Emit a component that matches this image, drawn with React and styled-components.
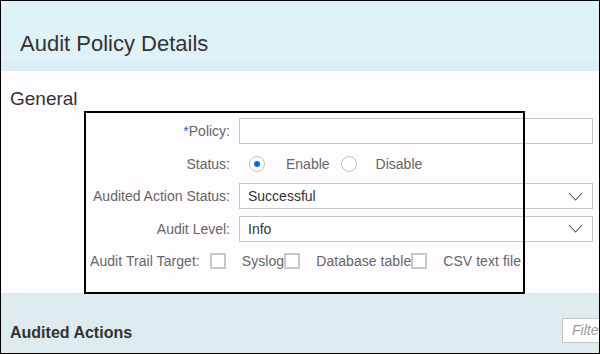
import React from 'react'
import styled, { createGlobalStyle } from 'styled-components'

const Global = createGlobalStyle`
    body {
        margin: 0;
        font-family: "Liberation Sans", Arial, sans-serif;
    }
`

const Frame = styled.div`
    width: 600px;
    height: 354px;
    box-sizing: border-box;
    border: 1px solid #000;
    display: flex;
    flex-direction: column;
    overflow: hidden;
`

const Header = styled.div`
    height: 70px;
    flex-shrink: 0;
    box-sizing: border-box;
    background: linear-gradient(#dff2f7 0, #dff2f7 61px, #dcedf5 61px);
    display: flex;
    align-items: center;
    padding: 16px 19px 0;
`

const HeaderTitle = styled.h1`
    margin: 0;
    font-size: 22px;
    font-weight: normal;
    color: #333;
`

const General = styled.div`
    position: relative;
    height: 222px;
    flex-shrink: 0;
    background: #fefcfe;
    padding: 17px 0 0 9px;
    box-sizing: border-box;
`

const SectionTitle = styled.h2`
    margin: 0;
    font-size: 19px;
    line-height: 21px;
    font-weight: normal;
    color: #333;
`

const Form = styled.div`
    margin: 9px 0 0 80px;
    display: grid;
    grid-template-columns: 140px 354px;
    column-gap: 9px;
    row-gap: 6.5px;
    grid-auto-rows: 26px;
`

const Label = styled.div`
    display: flex;
    align-items: center;
    justify-content: flex-end;
    font-size: 14px;
    color: #666;
`

const Req = styled.span`
    color: #0a6ed1;
`

const Input = styled.div`
    box-sizing: border-box;
    border: 1px solid #c6c6c6;
    background: #fff;
    display: flex;
    align-items: center;
    justify-content: space-between;
    padding: 0 9px 0 8px;
    font-size: 14px;
    color: #333;
`

const Radios = styled.div`
    display: flex;
    align-items: center;
    padding-left: 10px;
    font-size: 14px;
    color: #666;
`

const Radio = styled.span`
    width: 16px;
    height: 16px;
    box-sizing: border-box;
    border-radius: 50%;
    border: 1px solid #c2c2c2;
    background: #fff;
    display: flex;
    align-items: center;
    justify-content: center;
    margin-right: ${p => p.$after}px;

    &::after {
        content: '';
        width: 6px;
        height: 6px;
        border-radius: 50%;
        background: ${p => (p.$checked ? '#0a6ed1' : 'transparent')};
    }
`

const RadioText = styled.span`
    margin-right: ${p => p.$after || 0}px;
`

const TrailRow = styled.div`
    grid-column: 1 / -1;
    display: flex;
    align-items: center;
    font-size: 14px;
    letter-spacing: 0.06px;
    color: #666;
`

const TrailLabel = styled.span`
    margin-right: 10px;
`

const Check = styled.span`
    width: 16px;
    height: 16px;
    box-sizing: border-box;
    border: 2px solid #c8c8c8;
    background: #fff;
    margin-right: 16px;
    flex-shrink: 0;
`

const Annotation = styled.div`
    position: absolute;
    left: 83px;
    top: 40px;
    width: 441px;
    height: 183px;
    box-sizing: border-box;
    border: 2px solid #000;
    pointer-events: none;
`

const Actions = styled.div`
    flex: 1;
    background: #deebef;
    display: flex;
    align-items: center;
    justify-content: space-between;
    padding: 20px 0 0 9px;
`

const ActionsTitle = styled.h3`
    margin: 0;
    font-size: 16px;
    font-weight: bold;
    color: #333;
`

const Filter = styled.div`
    width: 37px;
    height: 25px;
    margin-top: -6px;
    box-sizing: border-box;
    border: 1px solid #c6c6c6;
    border-right: none;
    background: #fff;
    display: flex;
    align-items: center;
    padding-left: 9px;
    font-size: 14px;
    font-style: italic;
    color: #999;
    overflow: hidden;
    white-space: nowrap;
`

const Chevron = () => (
    <svg width="15" height="9" viewBox="0 0 15 9">
        <path d="M1 1 L7.5 8 L14 1" fill="none" stroke="#555" strokeWidth="1.1" />
    </svg>
)

const App = () => {
    return (
        <Frame>
            <Global />
            <Header>
                <HeaderTitle>Audit Policy Details</HeaderTitle>
            </Header>
            <General>
                <SectionTitle>General</SectionTitle>
                <Form>
                    <Label><Req>*</Req>Policy:</Label>
                    <Input />
                    <Label>Status:</Label>
                    <Radios>
                        <Radio $checked $after={21} />
                        <RadioText $after={11}>Enable</RadioText>
                        <Radio $after={19} />
                        <RadioText>Disable</RadioText>
                    </Radios>
                    <Label>Audited Action Status:</Label>
                    <Input>Successful<Chevron /></Input>
                    <Label>Audit Level:</Label>
                    <Input>Info<Chevron /></Input>
                    <TrailRow>
                        <TrailLabel>Audit Trail Target:</TrailLabel>
                        <Check />
                        <span>Syslog</span>
                        <Check />
                        <span>Database table</span>
                        <Check />
                        <span>CSV text file</span>
                    </TrailRow>
                </Form>
                <Annotation />
            </General>
            <Actions>
                <ActionsTitle>Audited Actions</ActionsTitle>
                <Filter>Filter</Filter>
            </Actions>
        </Frame>
    )
}

export default App
